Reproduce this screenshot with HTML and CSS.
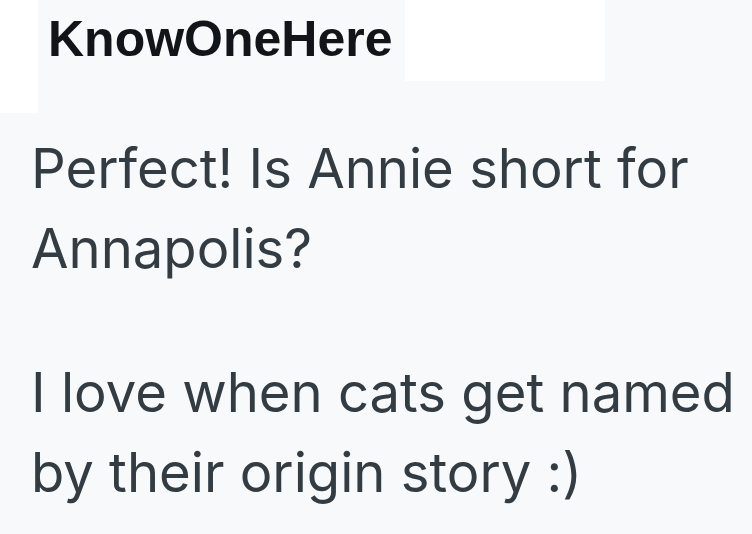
FILE: index.html
```html
<!DOCTYPE html>
<html>
<head>
<meta charset="utf-8">
<link rel="stylesheet" href="styles.css">
</head>
<body>
  <div class="comment">
    <div class="header">
      <div class="gutter"></div>
      <div class="author">KnowOneHere</div>
      <div class="blank"></div>
    </div>
    <div class="body">
      <p>Perfect! Is Annie short for Annapolis?</p>
      <p>I love when cats get named by their origin story :)</p>
    </div>
  </div>
</body>
</html>
```
FILE: styles.css
```css
html, body {
  margin: 0;
  padding: 0;
  background: #f8f9fb;
}
.comment {
  width: 752px;
  height: 534px;
  overflow: hidden;
}
.header {
  display: flex;
  align-items: flex-start;
  height: 113px;
}
.gutter {
  width: 38px;
  height: 113px;
  background: #ffffff;
}
.author {
  width: 367px;
  box-sizing: border-box;
  padding: 10px 0 0 10px;
  font-family: "Liberation Sans", Arial, sans-serif;
  font-weight: 700;
  font-size: 50px;
  color: #111418;
  line-height: normal;
}
.blank {
  width: 200px;
  height: 81px;
  background: #ffffff;
}
.body {
  padding: 15px 12px 0 31px;
  font-family: Inter, "Liberation Sans", sans-serif;
  font-size: 54.4px;
  line-height: 80px;
  color: #323c42;
}
.body p {
  margin: 0 0 64px 0;
}
```
